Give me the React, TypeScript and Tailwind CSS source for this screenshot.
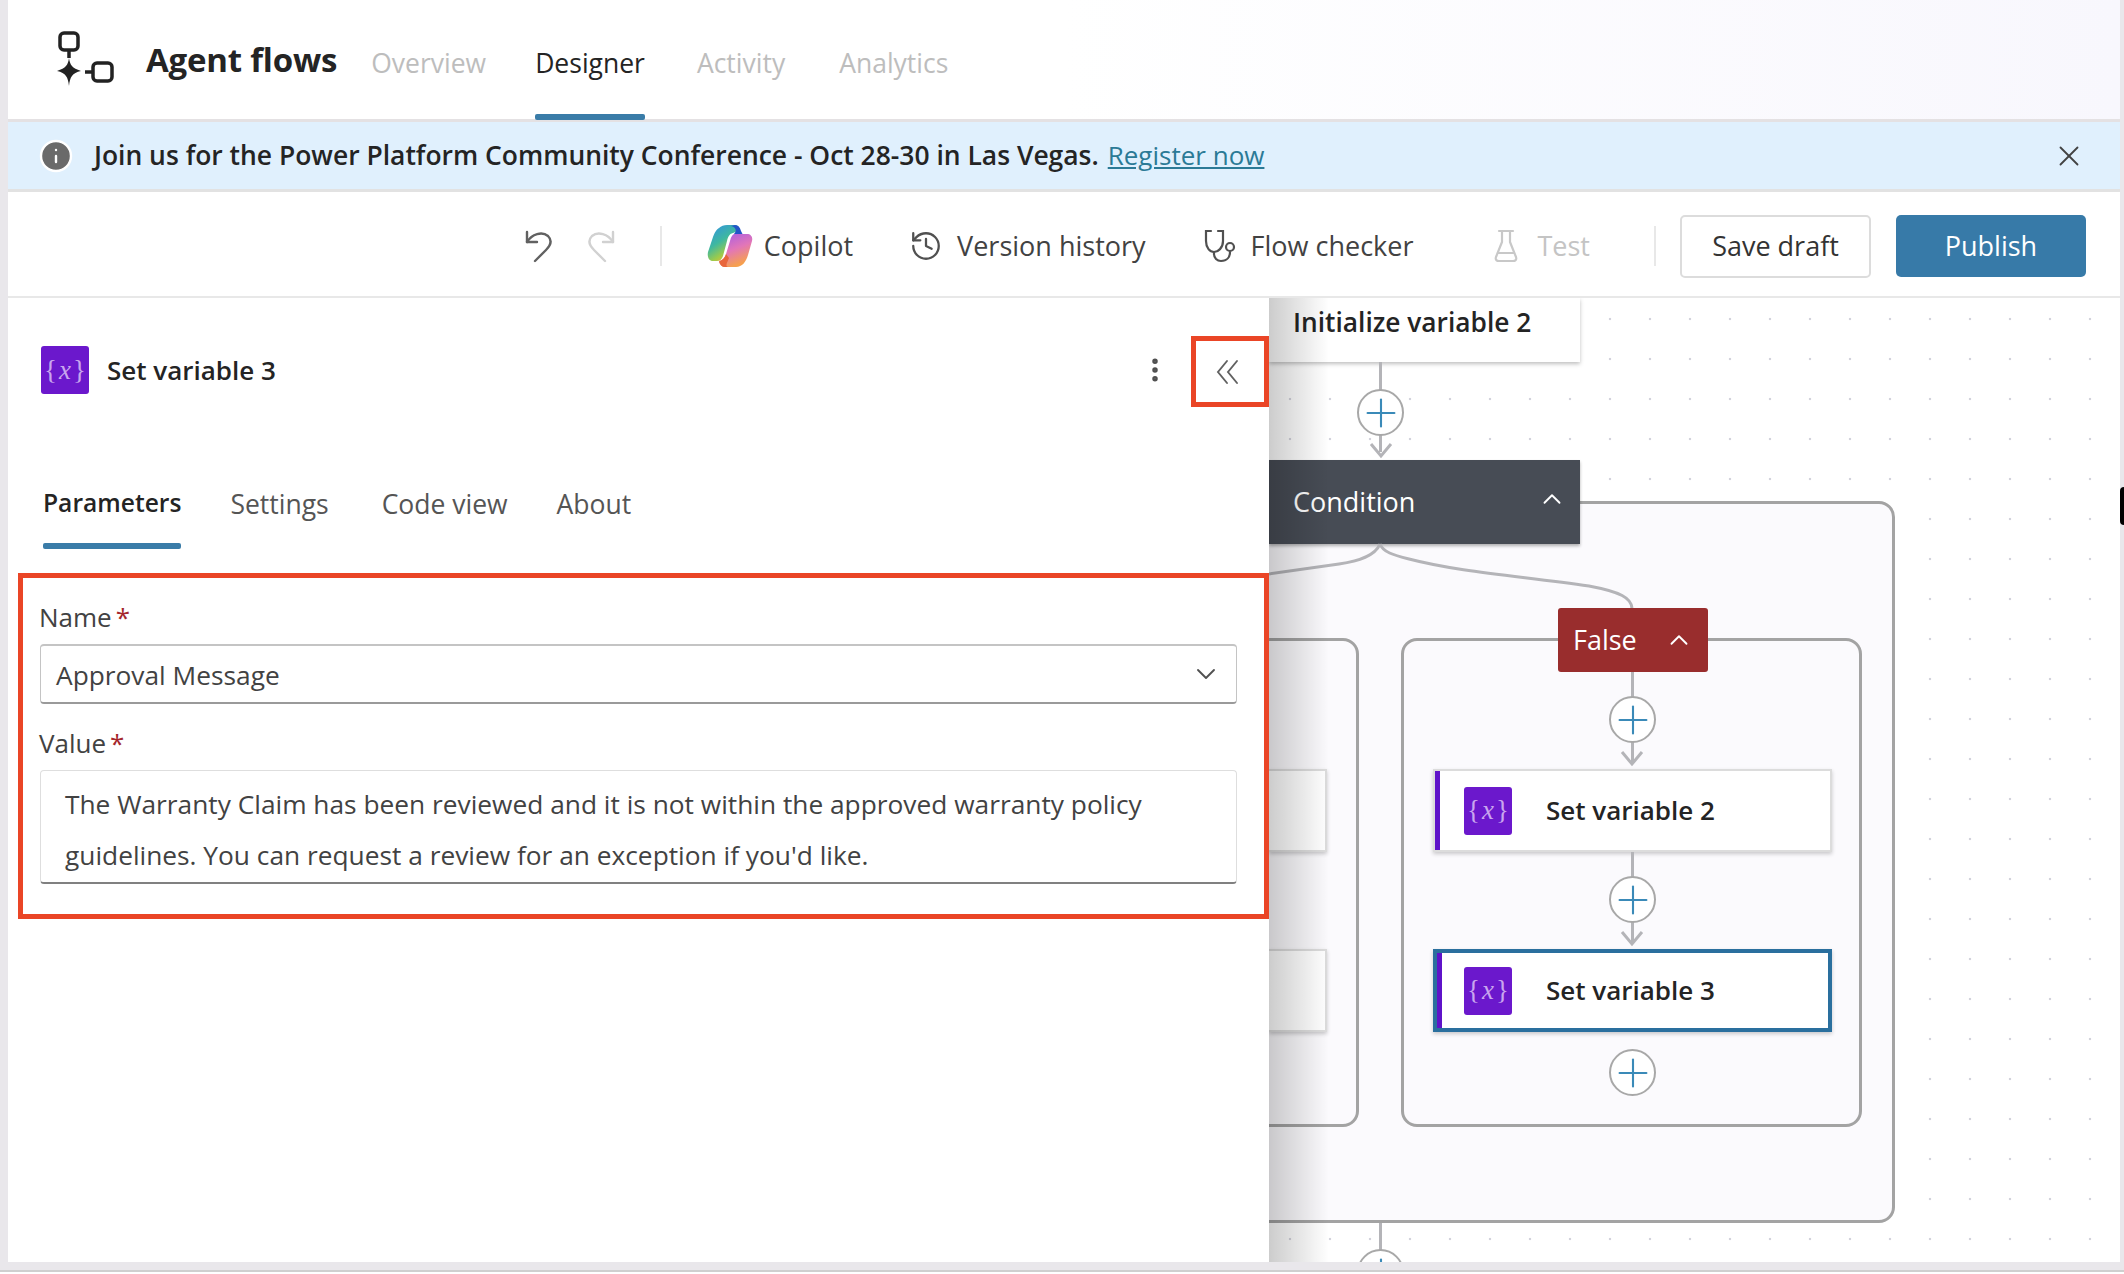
import { ChevronDown, ChevronUp, EllipsisVertical, History, Info, Plus, X } from 'lucide-react'

function VarIcon({ className }: { className: string }) {
  return (
    <div className={`flex items-center justify-center gap-[2px] rounded-[3px] bg-[#6b18cc] text-[#c9a6ee] font-['Liberation_Serif',serif] text-[27px] ${className}`}>
      <span>{'{'}</span>
      <span className="italic">x</span>
      <span>{'}'}</span>
    </div>
  )
}

function CopilotIcon() {
  return (
    <svg width="46" height="42" viewBox="0 0 46 42" fill="none">
      <defs>
        <linearGradient id="cpA" x1="0" y1="0" x2="0.6" y2="1">
          <stop offset="0" stopColor="#2f8fe8" />
          <stop offset="0.5" stopColor="#3fb8a0" />
          <stop offset="0.8" stopColor="#9ecb4a" />
          <stop offset="1" stopColor="#f3b23c" />
        </linearGradient>
        <linearGradient id="cpB" x1="0" y1="0" x2="0.4" y2="1">
          <stop offset="0" stopColor="#a35be8" />
          <stop offset="0.55" stopColor="#e276b8" />
          <stop offset="1" stopColor="#f6a04e" />
        </linearGradient>
      </defs>
      <path d="M12 3 C14 1 17 0 20 0 L28 0 C31 0 32 2 33 5 L26 8 C22 9 21 12 20 16 L16 31 C15 34 13 36 10 36 L6 36 C2 36 0 32 1 27 L6 12 C8 7 9 5 12 3 Z" fill="url(#cpA)" />
      <path d="M28 0 C31 0 33 2 34 6 L36 10 L27 9 C30 6 29 2 24 1 Z" fill="#2456c8" />
      <path d="M27 9 L40 9 C44 9 46 12 45 16 L41 30 C39 37 35 42 29 42 L18 42 C15 42 13 40 12 37 C16 36 18 33 19 29 L23 16 C24 12 25 10 27 9 Z" fill="url(#cpB)" />
      <path d="M12 36 C16 35 18 32 19 29 L22 33 C20 38 18 41 21 42 L18 42 C15 42 13 40 12 36 Z" fill="#e8663c" />
    </svg>
  )
}

function AgentLogo() {
  return (
    <svg width="60" height="58" viewBox="0 0 60 58" fill="none">
      <rect x="4" y="2" width="18" height="17" rx="4" stroke="#222" strokeWidth="3.5" />
      <path d="M13 19 V27" stroke="#222" strokeWidth="3.5" />
      <path d="M13 27 C14 34 16 37 25 40 C16 42 14 46 13 55 C12 46 10 42 1 40 C10 37 12 34 13 27 Z" fill="#222" />
      <path d="M29 41 H36" stroke="#222" strokeWidth="3.5" />
      <rect x="37" y="32" width="19" height="18" rx="4" stroke="#222" strokeWidth="3.5" />
    </svg>
  )
}

function UndoIcon({ className }: { className: string }) {
  return (
    <svg className={className} width="30" height="34" viewBox="0 0 30 34" fill="none" stroke="currentColor" strokeWidth="2.4" strokeLinecap="round" strokeLinejoin="round">
      <path d="M3 3 V13 H13" />
      <path d="M3 13 C8 5 18 2 24 7 C29 12 26 17 22 21 L11 32" />
    </svg>
  )
}

function StethoscopeIcon() {
  return (
    <svg className="ml-[56px] text-[#505050]" width="34" height="34" viewBox="0 0 34 34" fill="none" stroke="currentColor" strokeWidth="2.2" strokeLinecap="round">
      <path d="M9 2 H4 V12 C4 19 8 23 12 23 C16 23 21 19 21 12 V2 H16" />
      <path d="M12 23 V25 C12 29 15 32 19 32 C25 32 28 28 28 23" />
      <circle cx="28" cy="18" r="4" />
    </svg>
  )
}

function FlaskIcon() {
  return (
    <svg className="ml-[80px] text-[#c8c8c8]" width="26" height="34" viewBox="0 0 26 34" fill="none" stroke="currentColor" strokeWidth="2.2" strokeLinecap="round" strokeLinejoin="round">
      <path d="M6 2 H20" />
      <path d="M9 2 V13 L3 28 C2 31 4 32 6 32 H20 C22 32 24 31 23 28 L17 13 V2" />
      <path d="M5 24 H21" />
    </svg>
  )
}

function AddStep({ className }: { className: string }) {
  return (
    <div className={`absolute flex h-[47px] w-[47px] items-center justify-center rounded-full border-2 border-[#a8a8a8] bg-white ${className}`}>
      <Plus size={46} strokeWidth={1.1} className="shrink-0 text-[#3a8ab8]" />
    </div>
  )
}

function StepCard({ title, selected, className }: { title: string; selected?: boolean; className: string }) {
  return (
    <div className={`absolute flex h-[83px] w-[399px] items-center bg-white shadow-[0_2px_4px_rgba(0,0,0,0.2)] ${selected ? 'border-[4px] border-[#2a6f9e]' : 'border-2 border-[#dcdcdc]'} ${className}`}>
      <div className="absolute inset-y-0 left-0 w-[5px] bg-[#5f13c9]" />
      <VarIcon className={`h-[48px] w-[48px] ${selected ? 'ml-[27px]' : 'ml-[29px]'}`} />
      <span className="ml-[34px] text-[26px] font-semibold text-[#242424]">{title}</span>
    </div>
  )
}

function Connector({ x, top, height }: { x: string; top: string; height: string }) {
  return <div className={`absolute w-[3px] bg-[#b4b4b8] ${x} ${top} ${height}`} />
}

function Canvas() {
  return (
    <div className="relative flex-1 overflow-hidden bg-white bg-[radial-gradient(circle,#d3d3dc_1.3px,transparent_1.6px)] bg-[size:40px_40px] bg-[position:1px_1px]">
      {/* diagram coords are relative to the canvas, which starts at x 1269, y 298 */}
      <div className="absolute left-0 top-0 flex h-[64px] w-[311px] items-start bg-white pl-[24px] pt-[5px] text-[26.3px] font-semibold text-[#242424] shadow-[0_2px_4px_rgba(0,0,0,0.25)]">
        Initialize variable 2
      </div>
      <Connector x="left-[110px]" top="top-[64px]" height="h-[90px]" />
      <AddStep className="left-[88px] top-[91px]" />
      <svg className="absolute left-[100px] top-[142px]" width="24" height="20" fill="none">
        <path d="M2 4 L12 16 L22 4" stroke="#b4b4b8" strokeWidth="3" />
      </svg>

      {/* outer condition frame */}
      <div className="absolute left-[-20px] top-[203px] h-[722px] w-[646px] rounded-[16px] border-[3px] border-[#a3a3a3] bg-[#fbfafd]" />
      <div className="absolute left-[-20px] top-[340px] h-[489px] w-[110px] rounded-[16px] border-[3px] border-[#a3a3a3] bg-[#fbfafd]" />
      <div className="absolute left-[132px] top-[340px] h-[489px] w-[461px] rounded-[16px] border-[3px] border-[#a3a3a3] bg-[#fbfafd]" />

      <div className="absolute left-0 top-[162px] flex h-[84px] w-[311px] items-center justify-between bg-[#474c55] pl-[24px] pr-[13px] text-[27px] font-medium text-white shadow-[0_2px_3px_rgba(0,0,0,0.3)]">
        <span>Condition</span>
        <ChevronUp size={30} strokeWidth={1.5} className="mb-[6px]" />
      </div>

      <svg className="absolute left-0 top-[244px]" width="380" height="70" fill="none">
        <path d="M111 2 C106 14 90 19 70 22 L0 32" stroke="#b4b4b8" strokeWidth="3" />
        <path d="M111 2 C114 10 124 13 140 17 C190 30 250 34 320 44 C352 50 362 56 363 66" stroke="#b4b4b8" strokeWidth="3" />
      </svg>

      <div className="absolute left-[289px] top-[310px] flex h-[64px] w-[150px] items-center justify-between rounded-[3px] bg-[#992d2d] pl-[15px] pr-[14px] text-[27px] font-medium text-white">
        <span>False</span>
        <ChevronUp size={30} strokeWidth={1.5} />
      </div>

      <Connector x="left-[362px]" top="top-[374px]" height="h-[92px]" />
      <AddStep className="left-[340px] top-[398px]" />
      <svg className="absolute left-[351px] top-[450px]" width="24" height="20" fill="none">
        <path d="M2 4 L12 16 L22 4" stroke="#b4b4b8" strokeWidth="3" />
      </svg>
      <StepCard title="Set variable 2" className="left-[164px] top-[471px]" />

      <Connector x="left-[362px]" top="top-[554px]" height="h-[92px]" />
      <AddStep className="left-[340px] top-[578px]" />
      <svg className="absolute left-[351px] top-[630px]" width="24" height="20" fill="none">
        <path d="M2 4 L12 16 L22 4" stroke="#b4b4b8" strokeWidth="3" />
      </svg>
      <StepCard title="Set variable 3" selected className="left-[164px] top-[651px]" />
      <AddStep className="left-[340px] top-[751px]" />

      {/* true branch cards hidden behind the panel */}
      <div className="absolute left-0 top-[471px] h-[83px] w-[58px] border-2 border-l-0 border-[#dcdcdc] bg-white shadow-[0_2px_4px_rgba(0,0,0,0.2)]" />
      <div className="absolute left-0 top-[651px] h-[83px] w-[58px] border-2 border-l-0 border-[#dcdcdc] bg-white shadow-[0_2px_4px_rgba(0,0,0,0.2)]" />

      <Connector x="left-[110px]" top="top-[925px]" height="h-[30px]" />
      <AddStep className="left-[88px] top-[951px]" />

      {/* panel shadow falling on the canvas */}
      <div className="pointer-events-none absolute inset-y-0 left-0 w-[60px] bg-gradient-to-r from-[rgba(0,0,0,0.2)] to-transparent" />
    </div>
  )
}

function Field({ label, children }: { label: string; children: React.ReactNode }) {
  return (
    <div>
      <div className="-ml-[1px] flex h-[38px] items-center text-[26px] text-[#424242]">
        {label}
        <span className="ml-[4px] text-[#a4262c]">*</span>
      </div>
      {children}
    </div>
  )
}

export default function App() {
  return (
    <div className="relative flex h-[1274px] w-[2124px] flex-col overflow-hidden bg-white font-['Open_Sans',sans-serif] text-[#242424]">
      <div className="flex h-[1270px] bg-[#e9e7eb] pl-2 pr-1 pb-[8px]">
        <div className="flex min-w-0 flex-1 flex-col bg-white">
          {/* top nav */}
          <header className="flex h-[122px] items-center border-b-[3px] border-[#e4e1e3] bg-gradient-to-r from-white via-white to-[#f8f7fd] pl-[48px]">
            <AgentLogo />
            <span className="ml-[30px] text-[33px] font-bold tracking-[-0.2px]">Agent flows</span>
            <nav className="ml-[34px] flex h-full text-[26.5px]">
              <a className="mt-[44px] text-[#bdbdbd]">Overview</a>
              <a className="relative ml-[49px] mt-[44px] text-[26.5px] font-medium text-[#242424]">
                Designer
                <span className="absolute bottom-[-1px] left-0 right-0 h-[6px] rounded-[2px] bg-[#3a7ca8]" />
              </a>
              <a className="ml-[52px] mt-[44px] text-[#bdbdbd]">Activity</a>
              <a className="ml-[54px] mt-[44px] text-[#bdbdbd]">Analytics</a>
            </nav>
          </header>

          {/* banner */}
          <div className="flex h-[70px] items-center border-b-[3px] border-[#e2e2e2] bg-[#e0f0fd] pl-[32px] pr-[34px] text-[26px] font-semibold">
            <Info size={36} fill="#6a6a6a" stroke="#ffffff" strokeWidth={1.6} className="-ml-[2px]" />
            <span className="ml-[20px] text-[26.45px]">Join us for the Power Platform Community Conference - Oct 28-30 in Las Vegas.</span>
            <a className="ml-[9px] font-normal text-[#2b7a96] underline underline-offset-2">Register now</a>
            <X size={34} strokeWidth={1.3} className="ml-auto text-[#424242]" />
          </div>

          {/* toolbar */}
          <div className="flex h-[106px] items-center justify-end border-b-2 border-[#e8e8e8] pr-[34px] pt-[4px] text-[27px] font-medium text-[#424242]">
            <UndoIcon className="text-[#616161]" />
            <UndoIcon className="ml-[32px] -scale-x-100 text-[#d1d1d1]" />
            <div className="ml-[44px] h-[40px] w-[2px] bg-[#e8e8e8]" />
            <div className="ml-[45px]"><CopilotIcon /></div>
            <span className="ml-[11px]">Copilot</span>
            <History size={34} strokeWidth={1.6} className="ml-[56px] text-[#505050]" />
            <span className="ml-[14px]">Version history</span>
            <StethoscopeIcon />
            <span className="ml-[15px]">Flow checker</span>
            <FlaskIcon />
            <span className="ml-[18px] text-[#c4c4c4]">Test</span>
            <div className="ml-[64px] h-[40px] w-[2px] bg-[#e8e8e8]" />
            <button className="ml-[24px] h-[63px] w-[191px] rounded-[5px] border-2 border-[#dcdcdc] text-[#333]">Save draft</button>
            <button className="ml-[25px] h-[62px] w-[190px] rounded-[5px] bg-[#377aa8] text-white">Publish</button>
          </div>

          {/* body */}
          <div className="flex min-h-0 flex-1">
            <aside className="relative flex w-[1261px] shrink-0 flex-col bg-white">
              <div className="flex h-[96px] items-center pl-[33px] pt-[48px]">
                <VarIcon className="h-[48px] w-[48px]" />
                <span className="ml-[18px] text-[26px] font-semibold">Set variable 3</span>
                <EllipsisVertical size={30} strokeWidth={2.4} className="ml-auto mr-[99px] text-[#505050]" />
              </div>
              <div className="absolute right-0 top-[38px] flex h-[71px] w-[78px] items-center justify-center border-[5px] border-[#ea4526] pr-[4px]">
                <svg className="text-[#616161]" width="24" height="26" viewBox="0 0 24 26" fill="none" stroke="currentColor" strokeWidth="1.9" strokeLinecap="round">
                  <path d="M11 2 L2 13 L11 24" />
                  <path d="M21 2 L12 13 L21 24" />
                </svg>
              </div>

              <div className="mt-[91px] flex pl-[35px] text-[26.5px] text-[#555]">
                <a className="relative text-[24.6px] font-semibold text-[#242424]">
                  Parameters
                  <span className="absolute bottom-[-24px] left-0 right-0 h-[6px] rounded-[2px] bg-[#3a7ca8]" />
                </a>
                <a className="ml-[49px]">Settings</a>
                <a className="ml-[53px]">Code view</a>
                <a className="ml-[49px]">About</a>
              </div>

              <section className="ml-[10px] mt-[48px] h-[346px] border-[5px] border-[#ea4526] pl-[17px] pr-[27px] pt-[21px]">
                <Field label="Name">
                  <div className="mt-[7px] flex h-[60px] items-center justify-between rounded-[4px] border border-[#c4c4c4] border-y-2 border-b-[#9a9a9a] pl-[15px] pr-[14px] text-[26.3px] text-[#424242]">
                    <span className="pt-[3px]">Approval Message</span>
                    <ChevronDown size={32} strokeWidth={1.4} className="text-[#505050]" />
                  </div>
                </Field>
                <div className="mt-[21px]">
                  <Field label="Value">
                    <div className="mt-[7px] h-[114px] rounded-[4px] border border-[#dedede] border-b-2 border-b-[#808080] pl-[24px] pr-[40px] pt-[8px] text-[26.3px] leading-[51px] text-[#424242]">
                      The Warranty Claim has been reviewed and it is not within the approved warranty policy guidelines. You can request a review for an exception if you'd like.
                    </div>
                  </Field>
                </div>
              </section>
            </aside>
            <Canvas />
          </div>
        </div>
      </div>
      <div className="h-[2px] bg-[#cfcfcf]" />
      <div className="absolute right-0 top-[487px] h-[38px] w-[4px] rounded-l-[4px] bg-black" />
    </div>
  )
}
